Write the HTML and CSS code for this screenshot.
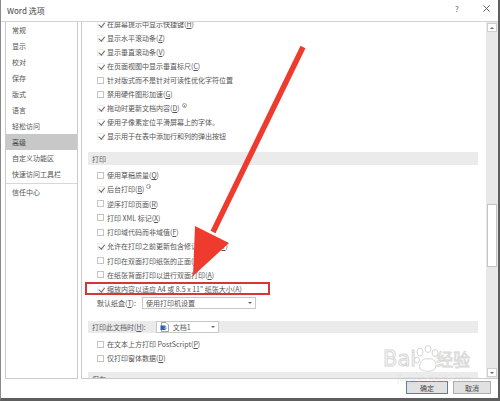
FILE: index.html
```html
<!DOCTYPE html>
<html lang="zh-CN">
  <head>
    <meta charset="UTF-8" />
    <meta name="viewport" content="width=device-width, initial-scale=1.0" />
    <title>Word 选项</title>
    <link rel="stylesheet" href="styles.css">
  </head>
  <body>
    <div class="window">
      <div class="titlebar">
        <span class="title">Word 选项</span>
        <span class="help">?</span>
        <svg class="close" width="7" height="7" viewBox="0 0 7 7">
          <path d="M0.5 0.5 L6.5 6.5 M6.5 0.5 L0.5 6.5" stroke="#555" stroke-width="0.9" fill="none" />
        </svg>
      </div>

      <div class="main">
        <ul class="nav">
          <li>常规</li>
          <li>显示</li>
          <li>校对</li>
          <li>保存</li>
          <li>版式</li>
          <li>语言</li>
          <li>轻松访问</li>
          <li class="active">高级</li>
          <li>自定义功能区</li>
          <li>快速访问工具栏</li>
          <li class="sep"></li>
          <li>信任中心</li>
        </ul>

        <div class="content">
          <div class="pane">
            <div class="list">
              <div class="row on"><span class="box"></span>在屏幕提示中显示快捷键(<u>H</u>)</div>
              <div class="row on"><span class="box"></span>显示水平滚动条(<u>Z</u>)</div>
              <div class="row on"><span class="box"></span>显示垂直滚动条(<u>V</u>)</div>
              <div class="row on"><span class="box"></span>在页面视图中显示垂直标尺(<u>C</u>)</div>
              <div class="row"><span class="box"></span>针对版式而不是针对可读性优化字符位置</div>
              <div class="row"><span class="box"></span>禁用硬件图形加速(<u>G</u>)</div>
              <div class="row on"><span class="box"></span>拖动时更新文档内容(<u>D</u>)<span class="info"></span></div>
              <div class="row on"><span class="box"></span>使用子像素定位平滑屏幕上的字体。</div>
              <div class="row on"><span class="box"></span>显示用于在表中添加行和列的弹出按钮</div>

              <div class="band">打印</div>
              <div class="print">
                <div class="row"><span class="box"></span>使用草稿质量(<u>Q</u>)</div>
                <div class="row on"><span class="box"></span>后台打印(<u>B</u>)<span class="info"></span></div>
                <div class="row"><span class="box"></span>逆序打印页面(<u>R</u>)</div>
                <div class="row"><span class="box"></span>打印 XML 标记(<u>X</u>)</div>
                <div class="row"><span class="box"></span>打印域代码而非域值(<u>F</u>)</div>
                <div class="row on"><span class="box"></span>允许在打印之前更新包含修订的字段(<u>T</u>)</div>
                <div class="row"><span class="box"></span>打印在双面打印纸张的正面(<u>R</u>)</div>
                <div class="row"><span class="box"></span>在纸张背面打印以进行双面打印(<u>A</u>)</div>
                <div class="row on"><span class="box"></span>缩放内容以适应 A4 或 8.5 x 11" 纸张大小(<u>A</u>)</div>
              </div>
              <div class="row">
                默认纸盒(<u>T</u>):
                <div class="select tray"><span class="select-text">使用打印机设置</span><span class="caret"></span></div>
              </div>

              <div class="band doc-band">
                打印此文档时(<u>H</u>):
                <div class="select doc">
                  <svg class="doc-icon" width="9" height="10" viewBox="0 0 9 10">
                    <path d="M1.5 0.5 H6 L8.5 3 V9.5 H1.5 Z" fill="#fff" stroke="#8a8a8a" stroke-width="0.8" />
                    <rect x="0.5" y="3.5" width="5" height="4.5" fill="#2b5fb0" />
                    <path d="M3.5 5 H7 M3.5 6.5 H7" stroke="#8aa8d8" stroke-width="0.6" />
                  </svg>
                  <span class="select-text">文档1</span><span class="caret"></span>
                </div>
              </div>
              <div class="row"><span class="box"></span>在文本上方打印 PostScript(<u>P</u>)</div>
              <div class="row"><span class="box"></span>仅打印窗体数据(<u>D</u>)</div>

              <div class="band last">保存</div>
            </div>
          </div>

          <div class="scrollbar">
            <div class="sb-btn up"></div>
            <div class="thumb"></div>
            <div class="sb-btn down"></div>
          </div>
        </div>
      </div>

      <div class="footer">
        <button class="btn primary">确定</button>
        <button class="btn">取消</button>
      </div>
    </div>

    <!-- red annotation drawn over the dialog -->
    <svg class="annot" width="500" height="401" viewBox="0 0 500 401">
      <line x1="303" y1="47" x2="213" y2="232" stroke="#ee3b2e" stroke-width="5.5" />
      <polygon points="195,226 229,243 193,276" fill="#ee3b2e" />
      <rect x="86" y="283" width="183" height="11" fill="none" stroke="#d8343a" stroke-width="2" />
    </svg>

    <div class="watermark">
      <div class="wm-line">
        <span class="wm-bai">Bai</span>
        <svg class="wm-paw" width="30" height="28" viewBox="0 0 30 28">
          <ellipse cx="8" cy="7" rx="3" ry="4" />
          <ellipse cx="16" cy="4" rx="3" ry="3.5" />
          <ellipse cx="23" cy="8" rx="3" ry="3.5" />
          <ellipse cx="5" cy="15" rx="2.5" ry="3" />
          <path d="M8 24 C6 18 12 12 16 14 C21 12 26 18 23 24 C20 27 12 27 8 24 Z" />
        </svg>
        <span class="wm-jy">经验</span>
      </div>
      <div class="wm-url">jingyan.baidu.com</div>
    </div>
  </body>
</html>
```

FILE: styles.css
```css
* {
  box-sizing: border-box;
}
body {
  position: relative;
  margin: 0;
  width: 500px;
  height: 401px;
  overflow: hidden;
  font-family: "Noto Sans CJK SC", "Noto Sans", sans-serif;
  color: #555;
}
.window {
  width: 500px;
  height: 401px;
  background: #fff;
  border-left: 1px solid #8a8a8a;
  border-right: 2px solid #5e5e5e;
  border-bottom: 3px solid #5e5e5e;
  display: flex;
  flex-direction: column;
}
/* Title bar */
.titlebar {
  height: 22px;
  flex: none;
  border-bottom: 1px solid #d3d3d3;
  display: flex;
  align-items: center;
  padding: 0 8px 0 6px;
}
.title {
  flex: 1;
  font-size: 8px;
  color: #444;
  padding-bottom: 1px;
}
.help {
  width: 10px;
  text-align: center;
  font-size: 8px;
  color: #666;
  margin-right: 21px;
  padding-bottom: 4px;
}
.close {
  margin-bottom: 4px;
}
/* Left navigation */
.main {
  height: 357px;
  flex: none;
  display: flex;
  padding-left: 4px;
  gap: 3px;
}
.nav {
  width: 73px;
  margin: 0;
  padding: 0;
  list-style: none;
  border: 1px solid #cbcbcb;
  border-top: 0;
  font-size: 7px;
}
.nav li {
  height: 16px;
  line-height: 16px;
  padding-left: 6px;
  white-space: nowrap;
}
.nav li.active {
  background: #c8c8c8;
  color: #444;
}
.nav li.sep {
  height: 1px;
  margin-top: 1px;
  background: #d8d8d8;
}
/* Options pane */
.content {
  flex: 1;
  display: flex;
  border-left: 1px solid #cbcbcb;
  border-bottom: 1px solid #cbcbcb;
}
.pane {
  flex: 1;
  overflow: hidden;
  padding: 0 8px 0 6px;
}
.list {
  margin-top: -5px;
}
.row {
  height: 14px;
  display: flex;
  align-items: center;
  padding-left: 9px;
  font-size: 7px;
  white-space: nowrap;
}
.print .row {
  height: 14.25px;
}
.row u {
  text-decoration-thickness: 0.5px;
  text-underline-offset: 1px;
}
.box {
  position: relative;
  flex: none;
  width: 7px;
  height: 7px;
  border: 1px solid #c4c4c4;
  margin-right: 3px;
}
.row.on .box {
  border-color: #eeeeee;
}
.row.on .box:after {
  content: "";
  position: absolute;
  left: 1.5px;
  top: -0.5px;
  width: 2.5px;
  height: 4.5px;
  border-right: 0.8px solid #666;
  border-bottom: 0.8px solid #666;
  transform: rotate(40deg);
}
.info {
  position: relative;
  align-self: flex-start;
  width: 5px;
  height: 5px;
  margin: 2px 0 0 2px;
  border: 0.8px solid #a0a0a0;
  border-radius: 50%;
}
.info:after {
  content: "";
  position: absolute;
  left: 1.3px;
  top: 1px;
  width: 0.8px;
  height: 2px;
  background: #a0a0a0;
}
.band {
  height: 13px;
  display: flex;
  align-items: center;
  padding-left: 4px;
  margin: 9px 0 3px;
  background: #ebebeb;
  font-size: 7px;
  color: #5a5a5a;
  white-space: nowrap;
}
.band.doc-band {
  height: 12px;
  margin: 11px 0 4px;
}
.band.last {
  margin: 7px 0 0;
}
.select {
  display: flex;
  align-items: center;
  height: 12px;
  background: #fff;
  border: 1px solid #c8c8c8;
  padding: 0 3px;
}
.select-text {
  flex: 1;
}
.select.tray {
  width: 114px;
  margin-left: 6px;
}
.select.doc {
  width: 63px;
  height: 12px;
  margin-left: 10px;
}
.doc-icon {
  margin-right: 4px;
}
.caret {
  width: 0;
  height: 0;
  border-left: 2px solid transparent;
  border-right: 2px solid transparent;
  border-top: 2px solid #666;
}
/* Scrollbar */
.scrollbar {
  width: 12px;
  flex: none;
  background: #e8e8e8;
  display: flex;
  flex-direction: column;
  align-items: center;
}
.sb-btn {
  width: 10px;
  height: 9px;
  margin-top: 1px;
  background: #fff;
  border: 1px solid #cfcfcf;
  display: flex;
  align-items: center;
  justify-content: center;
}
.sb-btn:after {
  content: "";
  border-left: 2px solid transparent;
  border-right: 2px solid transparent;
}
.sb-btn.up:after {
  border-bottom: 2px solid #666;
}
.sb-btn.down {
  margin-top: auto;
  margin-bottom: 1px;
}
.sb-btn.down:after {
  border-top: 2px solid #666;
}
.thumb {
  width: 10px;
  height: 63px;
  margin-top: 172px;
  background: #fff;
  border: 1px solid #c3c3c3;
}
/* Footer buttons */
.footer {
  flex: 1;
  display: flex;
  justify-content: flex-end;
  align-items: flex-start;
  gap: 5px;
  padding: 2px 7px 0 0;
}
.btn {
  height: 13px;
  width: 38px;
  padding: 0;
  font-family: inherit;
  font-size: 7px;
  color: #444;
  background: #e1e1e1;
  border: 1px solid #adadad;
}
.btn.primary {
  width: 42px;
  border-color: #5f7ca3;
}
/* Overlays */
.annot {
  position: absolute;
  left: 0;
  top: 0;
  pointer-events: none;
}
.watermark {
  position: absolute;
  left: 383px;
  top: 345px;
  pointer-events: none;
  opacity: 0.75;
}
.wm-line {
  display: flex;
  align-items: center;
}
.wm-bai {
  font-family: "DejaVu Sans", sans-serif;
  font-size: 21px;
  line-height: 28px;
  color: rgba(255, 255, 255, 0.6);
  -webkit-text-stroke: 1px #c9c9c9;
}
.wm-paw {
  margin-left: -4px;
  fill: rgba(255, 255, 255, 0.6);
  stroke: #c9c9c9;
  stroke-width: 1;
}
.wm-jy {
  margin-left: -6px;
  font-size: 17px;
  line-height: 28px;
  color: rgba(255, 255, 255, 0.6);
  -webkit-text-stroke: 0.8px #c9c9c9;
}
.wm-url {
  margin: 2px 0 0 14px;
  font-family: "DejaVu Sans", sans-serif;
  font-size: 8px;
  color: rgba(200, 200, 200, 0.5);
}
```
